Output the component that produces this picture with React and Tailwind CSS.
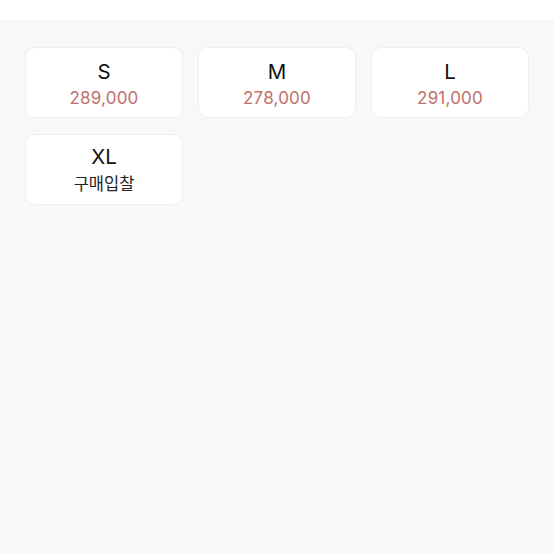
export default function App() {
  const items = [
    { size: "S", price: "289,000" },
    { size: "M", price: "278,000" },
    { size: "L", price: "291,000" },
    { size: "XL", price: null },
  ];
  return (
    <div
      className="w-[554px] h-[554px] bg-[#f8f8f8] flex flex-col"
      style={{ fontFamily: 'Inter, "Noto Sans CJK KR", sans-serif' }}
    >
      <div className="h-[20px] bg-white shrink-0" />
      <div className="grid grid-cols-3 gap-x-[15px] gap-y-[16px] px-[25px] pt-[27px]">
        {items.map((it) => (
          <div
            key={it.size}
            className={`h-[71px] bg-white rounded-[10px] border border-[#efefef] flex flex-col items-center justify-center ${it.price ? "pt-[4px]" : "pt-0"}`}
          >
            <div className="text-[20.5px] leading-[26px] text-[#111]">{it.size}</div>
            {it.price ? (
              <div className="text-[17px] leading-[26px] text-[#c0716b] tracking-[0.2px]">{it.price}</div>
            ) : (
              <div className="text-[16.5px] leading-[26px] text-[#222]" style={{ fontFamily: '"Noto Sans CJK KR", sans-serif' }}>구매입찰</div>
            )}
          </div>
        ))}
      </div>
    </div>
  );
}
